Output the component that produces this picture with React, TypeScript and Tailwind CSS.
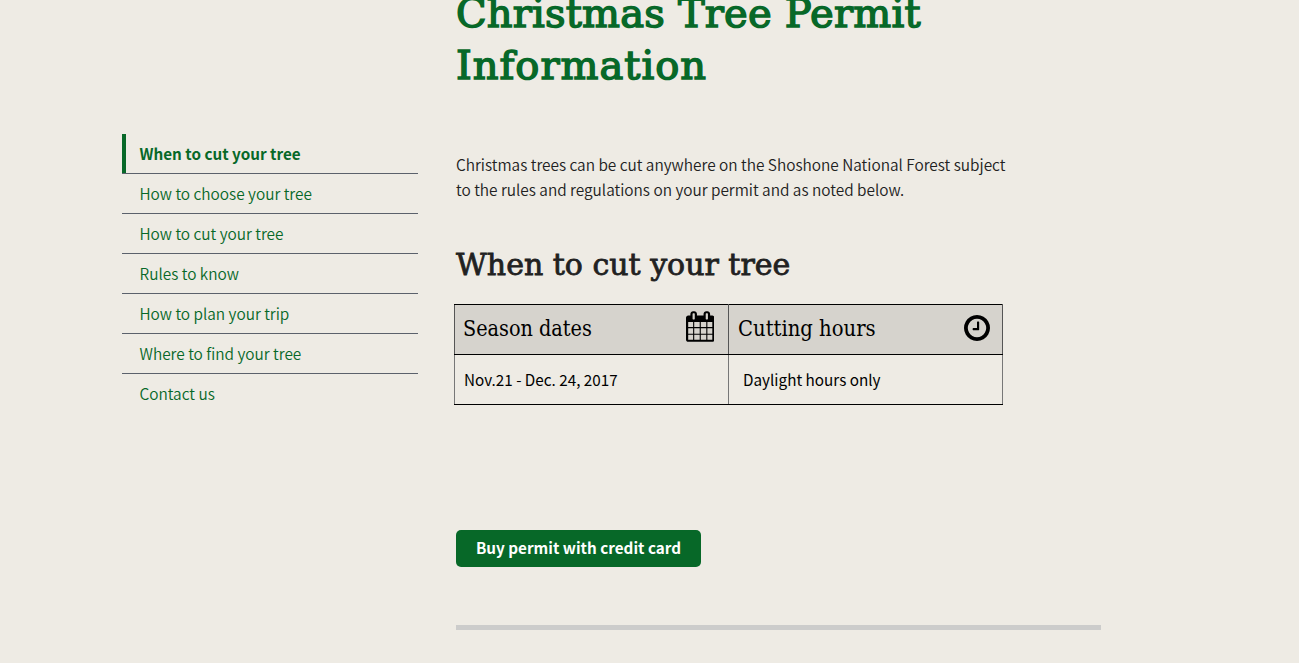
const sans = "font-['Noto_Sans_CJK_SC',sans-serif]";
const serif = "font-['DejaVu_Serif_Condensed','DejaVu_Serif',serif]";
const headingSerif = "font-['DejaVu_Serif',serif]";

const links = [
  'When to cut your tree',
  'How to choose your tree',
  'How to cut your tree',
  'Rules to know',
  'How to plan your trip',
  'Where to find your tree',
  'Contact us',
];

function CalendarIcon() {
  return (
    <svg viewBox="64 0 1664 1792" className="mb-[6px] h-[31px] w-[28.5px]" fill="#000" aria-hidden="true">
      <path d="M192 1664h288v-288h-288v288zm352 0h320v-288h-320v288zm-352-352h288v-320h-288v320zm352 0h320v-320h-320v320zm-352-384h288v-288h-288v288zm736 736h320v-288h-320v288zm-384-736h320v-288h-320v288zm768 736h288v-288h-288v288zm-384-352h320v-320h-320v320zm-352-864v-288q0-13-9.5-22.5t-22.5-9.5h-64q-13 0-22.5 9.5t-9.5 22.5v288q0 13 9.5 22.5t22.5 9.5h64q13 0 22.5-9.5t9.5-22.5zm736 864h288v-320h-288v320zm-384-384h320v-288h-320v288zm384 0h288v-288h-288v288zm32-480v-288q0-13-9.5-22.5t-22.5-9.5h-64q-13 0-22.5 9.5t-9.5 22.5v288q0 13 9.5 22.5t22.5 9.5h64q13 0 22.5-9.5t9.5-22.5zm384-64v1280q0 52-38 90t-90 38h-1408q-52 0-90-38t-38-90v-1280q0-52 38-90t90-38h128v-96q0-66 47-113t113-47h64q66 0 113 47t47 113v96h384v-96q0-66 47-113t113-47h64q66 0 113 47t47 113v96h128q52 0 90 38t38 90z" />
    </svg>
  );
}

function ClockIcon() {
  return (
    <svg viewBox="128 128 1536 1536" className="mb-[3px] size-[26px]" fill="#000" aria-hidden="true">
      <path d="M1024 544v448q0 14-9 23t-23 9h-320q-14 0-23-9t-9-23v-64q0-14 9-23t23-9h224v-352q0-14 9-23t23-9h64q14 0 23 9t9 23zm416 352q0-148-73-273t-198-198-273-73-273 73-198 198-73 273 73 273 198 198 273 73 273-73 198-198 73-273zm224 0q0 209-103 385.5t-279.5 279.5-385.5 103-385.5-103-279.5-279.5-103-385.5 103-385.5 279.5-279.5 385.5-103 385.5 103 279.5 279.5 103 385.5z" />
    </svg>
  );
}

export default function App() {
  return (
    <div className={`flex h-[663px] overflow-hidden bg-[#eeebe4] pl-[122px] text-[#212121] ${sans}`}>
      <nav className="mt-[134px] w-[296px] shrink-0 text-[15.38px] leading-[23px] text-[#076828]">
        <ul>
          {links.map((label, i) => (
            <li key={label} className={i < links.length - 1 ? 'h-10 border-b border-[#5b616b]' : 'h-10'}>
              <a
                href="#"
                className={
                  i === 0
                    ? 'flex h-full items-center border-l-4 border-[#076828] pl-[13.5px] text-[15.25px] font-bold'
                    : i === links.length - 1
                      ? 'flex h-full items-center pb-px pl-[17.5px] font-[350]'
                      : 'flex h-full items-center pl-[17.5px] font-[350]'
                }
              >
                {label}
              </a>
            </li>
          ))}
        </ul>
      </nav>

      <main className="ml-[38px] w-[645px] shrink-0">
        <h1
          className={`-mt-[13px] text-[40px] leading-[52px] font-normal text-[#076828] [-webkit-text-stroke:1.5px_#076828] ${headingSerif}`}
        >
          <span className="block tracking-[0.2px] whitespace-nowrap">Christmas Tree Permit</span>
          <span className="block tracking-[1px] whitespace-nowrap">Information</span>
        </h1>
        <p className="mt-[61px] text-[15.38px] leading-[25px] font-[350] whitespace-nowrap">
          Christmas trees can be cut anywhere on the Shoshone National Forest subject
          <br />
          to the rules and regulations on your permit and as noted below.
        </p>
        <h2
          className={`mt-[43px] text-[30px] leading-[40px] font-normal whitespace-nowrap [-webkit-text-stroke:0.8px_#212121] ${headingSerif}`}
        >
          When to cut your tree
        </h2>
        <table className="mt-[19px] -ml-[2px] w-[549px] table-fixed border-collapse border border-black text-black">
          <thead>
            <tr className="h-[50px] bg-[#d6d3cd]">
              <th className="border-x border-x-[#555] border-y border-y-black p-0 font-normal">
                <div className="flex items-center justify-between pr-[14px] pl-2">
                  <span className={`-mt-px text-[21.4px] leading-[30px] ${serif}`}>Season dates</span>
                  <CalendarIcon />
                </div>
              </th>
              <th className="border-x border-x-[#555] border-y border-y-black p-0 font-normal">
                <div className="flex items-center justify-between pr-3 pl-[9px]">
                  <span className={`-mt-px text-[21.8px] leading-[30px] ${serif}`}>Cutting hours</span>
                  <ClockIcon />
                </div>
              </th>
            </tr>
          </thead>
          <tbody>
            <tr className="h-[50px] text-[15.25px] leading-[23px]">
              <td className="border-x border-x-[#777] border-b border-b-black p-0 pl-[9px]">
                Nov.21 - Dec. 24, 2017
              </td>
              <td className="border-x border-x-[#777] border-b border-b-black p-0 pl-[14px]">
                Daylight hours only
              </td>
            </tr>
          </tbody>
        </table>
        <button className="mt-[125px] flex h-[37px] w-[245px] items-center justify-center rounded-[5px] bg-[#076828] pb-[2px] text-[15.25px] leading-[23px] font-bold text-white">
          Buy permit with credit card
        </button>
        <div className="mt-[58px] h-[5px] bg-[#cccccb]" />
      </main>
    </div>
  );
}
